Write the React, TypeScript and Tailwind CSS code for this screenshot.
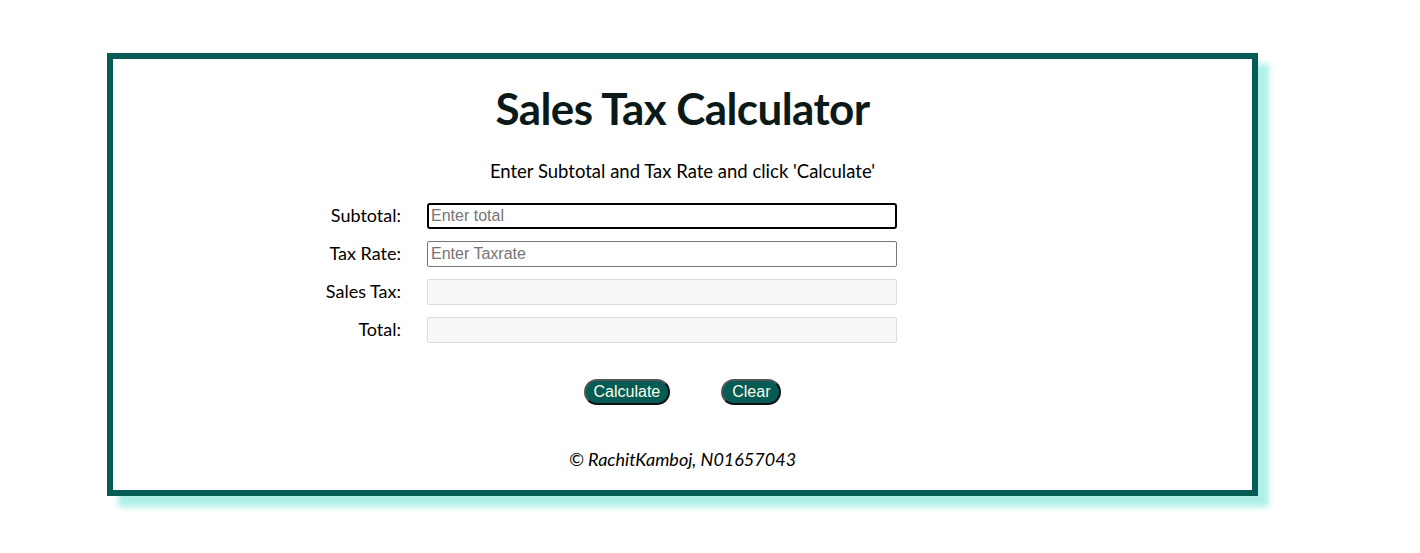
import React from "react";

const rows = [
  { label: "Subtotal:", placeholder: "Enter total", kind: "focus" },
  { label: "Tax Rate:", placeholder: "Enter Taxrate", kind: "normal" },
  { label: "Sales Tax:", placeholder: "", kind: "disabled" },
  { label: "Total:", placeholder: "", kind: "disabled" },
];

export default function App() {
  return (
    <div className="w-[1420px] h-[553px] bg-white pt-[53px] font-['Lato',sans-serif] text-black">
      <div className="ml-[107px] w-[1151px] h-[443px] border-[6px] border-[#055c55] bg-white shadow-[11px_11px_6px_#aef0e8] flex flex-col">
        <h1 className="mt-[25px] text-center text-[44px] leading-[48px] font-bold text-[#0b1a18] tracking-[-0.6px]">
          Sales Tax Calculator
        </h1>
        <p className="mt-[27px] text-center text-[18.5px] leading-[24px]">
          Enter Subtotal and Tax Rate and click 'Calculate'
        </p>
        <div className="mt-[20px] flex flex-col gap-[12px]">
          {rows.map((r) => (
            <div key={r.label} className="flex items-center h-[26px]">
              <label className="w-[288px] text-right text-[18px] leading-[24px] -mt-[2px]">{r.label}</label>
              {r.kind === "focus" && (
                <input
                  placeholder={r.placeholder}
                  className="ml-[26px] w-[470px] h-[26px] border-2 border-black rounded-[3px] px-[2px] font-['Liberation_Sans',Arial,sans-serif] text-[16px] placeholder:text-[#757575] outline-none"
                />
              )}
              {r.kind === "normal" && (
                <input
                  placeholder={r.placeholder}
                  className="ml-[26px] w-[470px] h-[26px] border border-[#767676] rounded-[2px] px-[3px] font-['Liberation_Sans',Arial,sans-serif] text-[16px] placeholder:text-[#757575] outline-none"
                />
              )}
              {r.kind === "disabled" && (
                <input
                  disabled
                  className="ml-[26px] w-[470px] h-[26px] border border-[#dcdcdc] bg-[#f8f8f8] rounded-[2px] outline-none"
                />
              )}
            </div>
          ))}
        </div>
        <div className="mt-[36px] flex justify-center gap-[51px]">
          <button className="h-[26px] px-[8px] rounded-full bg-[#055c55] text-[#fffbe8] text-[16px] leading-none font-['Liberation_Sans',Arial,sans-serif] border-2 border-t-[#555] border-l-[#555] border-b-[#111] border-r-[#111]">
            Calculate
          </button>
          <button className="h-[26px] px-[9px] rounded-full bg-[#055c55] text-[#fffbe8] text-[16px] leading-none font-['Liberation_Sans',Arial,sans-serif] border-2 border-t-[#555] border-l-[#555] border-b-[#111] border-r-[#111]">
            Clear
          </button>
        </div>
        <p className="mt-[42px] text-center italic text-[18px] leading-[24px]">
          © RachitKamboj, N01657043
        </p>
      </div>
    </div>
  );
}
